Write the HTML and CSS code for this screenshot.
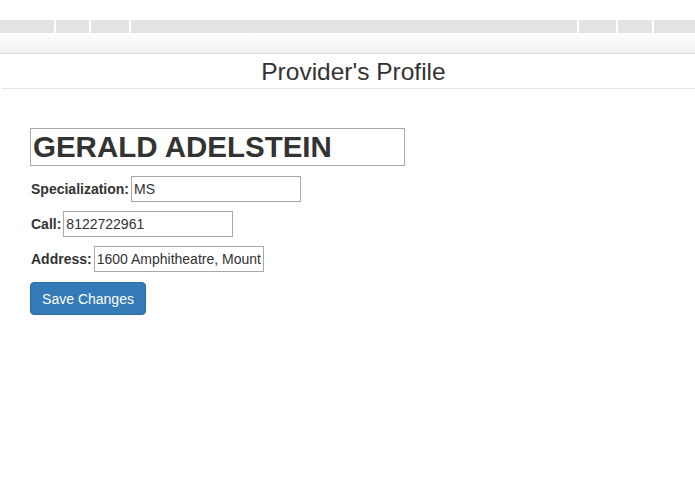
FILE: index.html
```html
<!DOCTYPE html>
<html>
<head>
<meta charset="utf-8">
<link rel="stylesheet" href="styles.css">
</head>
<body>
<div class="topbar">
  <div class="seg s1"></div>
  <div class="seg s2"></div>
  <div class="seg s3"></div>
  <div class="seg s4"></div>
  <div class="seg s5"></div>
  <div class="seg s6"></div>
  <div class="seg s7"></div>
</div>
<div class="navbar"></div>
<div class="header"><h2 class="title">Provider's Profile</h2></div>
<form class="profile">
  <input class="name-input" type="text" value="GERALD ADELSTEIN">
  <div class="row"><label class="lbl">Specialization:</label><input class="field" type="text" value="MS"></div>
  <div class="row"><label class="lbl">Call:</label><input class="field" type="text" value="8122722961"></div>
  <div class="row"><label class="lbl">Address:</label><input class="field" type="text" value="1600 Amphitheatre, Mountain View, CA"></div>
  <button class="btn" type="button">Save Changes</button>
</form>
</body>
</html>
```
FILE: styles.css
```css
html, body {
  margin: 0;
  padding: 0;
  background: #fff;
  font-family: "Liberation Sans", Arial, sans-serif;
  color: #333;
  font-size: 14px;
}
.topbar {
  margin-top: 20px;
  height: 13px;
  display: flex;
  gap: 2px;
  background: #fff;
}
.seg { background: #e3e3e3; height: 13px; }
.s1 { width: 54px; }
.s2 { width: 33px; }
.s3 { width: 38px; }
.s4 { flex: 1; }
.s5 { width: 37px; }
.s6 { width: 34px; }
.s7 { width: 41px; }
.navbar {
  height: 20px;
  background: linear-gradient(#ffffff, #f2f2f2);
  border-bottom: 1px solid #dcdcdc;
}
.header {
  margin-left: 2px;
  height: 34px;
  border-bottom: 1px solid #e5e5e5;
  padding-left: 10px;
  display: flex;
  align-items: center;
  justify-content: center;
}
.title {
  margin: 2px 0 0 0;
  font-size: 24.5px;
  font-weight: normal;
  line-height: 1.1;
  color: #333;
}
.profile {
  padding: 39px 0 0 30px;
  display: flex;
  flex-direction: column;
  align-items: flex-start;
}
.name-input {
  box-sizing: border-box;
  width: 375px;
  height: 38px;
  margin: 0 0 10px 0;
  padding: 0 2px;
  border: 1px solid #a9a9a9;
  font-family: "Liberation Sans", Arial, sans-serif;
  font-weight: bold;
  font-size: 29.5px;
  color: #333;
  background: #fff;
}
.row {
  display: flex;
  align-items: center;
  gap: 2px;
  margin-bottom: 9px;
}
.lbl {
  font-weight: bold;
  font-size: 14px;
  padding-left: 1px;
}
.field {
  box-sizing: border-box;
  width: 170px;
  height: 26px;
  margin: 0;
  padding: 0 2px;
  border: 1px solid #a9a9a9;
  font-family: "Liberation Sans", Arial, sans-serif;
  font-size: 14px;
  color: #333;
  background: #fff;
}
.btn {
  margin-top: 1px;
  box-sizing: border-box;
  width: 116px;
  height: 33px;
  background: #337ab7;
  border: 1px solid #2e6da4;
  border-radius: 4px;
  color: #fff;
  font-family: "Liberation Sans", Arial, sans-serif;
  font-size: 14px;
  padding: 0;
  white-space: nowrap;
  text-align: center;
}
```
